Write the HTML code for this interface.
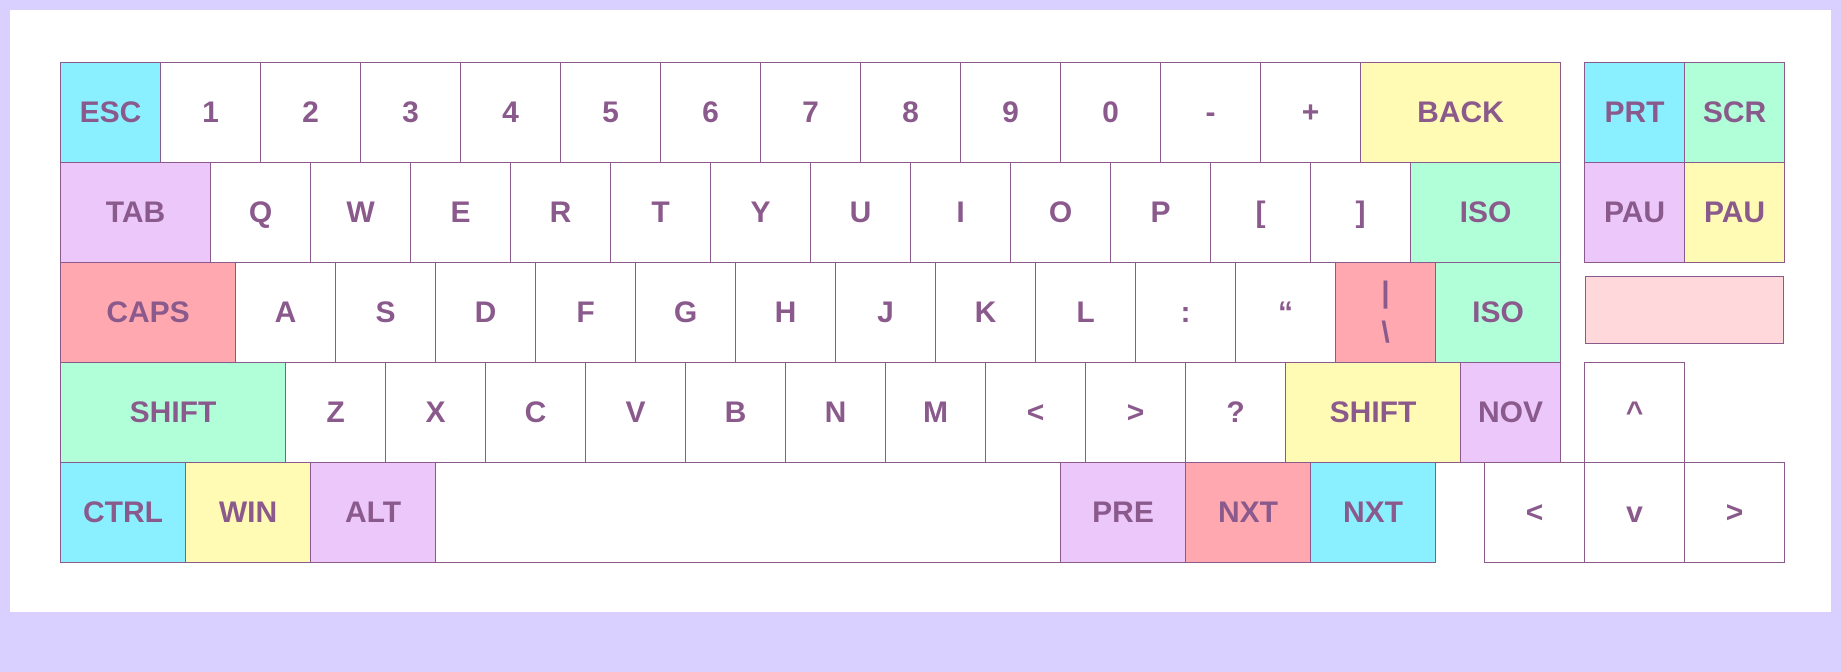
<!DOCTYPE html>
<html><head><meta charset="utf-8"><style>
body{margin:0;width:1841px;height:672px;background:#dad0ff;position:relative;overflow:hidden;font-family:"Liberation Sans",sans-serif}
#p{position:absolute;left:10px;top:10px;width:1821px;height:602px;background:#fff}
.k{position:absolute;box-sizing:border-box;border:1.5px solid #8b5a8c;display:flex;align-items:center;justify-content:center;color:#8b5a8c;font-weight:bold;font-size:30px;background:#fff;height:100px}
.c{background:#8af0ff}.l{background:#ecc8fa}.y{background:#fffab4}.g{background:#b0ffd8}.r{background:#ffa8b0}
</style></head><body><div id="p"></div>
<div id="kb"></div>
<script>
const rows=[
[62,60,[["ESC",1,"c"],..."1234567890-+".split("").map(x=>[x,1]),["BACK",2,"y"]]],
[162,60,[["TAB",1.5,"l"],..."QWERTYUIOP[]".split("").map(x=>[x,1]),["ISO",1.5,"g"]]],
[262,60,[["CAPS",1.75,"r"],..."ASDFGHJKL:“".split("").map(x=>[x,1]),["|<br>\\",1,"r"],["ISO",1.25,"g"]]],
[362,60,[["SHIFT",2.25,"g"],..."ZXCVBNM<>?".split("").map(x=>[x,1]),["SHIFT",1.75,"y"],["NOV",1,"l"]]],
[462,60,[["CTRL",1.25,"c"],["WIN",1.25,"y"],["ALT",1.25,"l"],["",6.25],["PRE",1.25,"l"],["NXT",1.25,"r"],["NXT",1.25,"c"]]],
[62,1584,[["PRT",1,"c"],["SCR",1,"g"]]],
[162,1584,[["PAU",1,"l"],["PAU",1,"y"]]],
[362,1584,[["^",1]]],
[462,1484,[["&lt;",1],["v",1],["&gt;",1]]]];
let h="";
for(const [y,x0,ks] of rows){let x=x0;for(const [t,w,c] of ks){const tt=t=="<"?"&lt;":t==">"?"&gt;":t;
h+=`<div class="k ${c||""}" style="left:${x}px;top:${y}px;width:${w*100+1}px;height:101px;${tt.includes("<br>")?"line-height:40px;text-align:center;":""}"><span>${tt}</span></div>`;x+=w*100;}}
h+=`<div class="k" style="left:1585px;top:276px;width:199px;height:68px;background:#ffd8dc"></div>`;
document.getElementById("kb").innerHTML=h;
</script></body></html>
